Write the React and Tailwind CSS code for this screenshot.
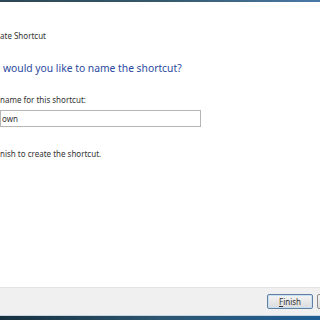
export default function App() {
    const font = { fontFamily: '"Noto Sans", "Open Sans", sans-serif' };

    return (
        <div className="w-[320px] h-[320px] flex flex-col overflow-hidden bg-white" style={font}>
            {/* window frame top */}
            <div className="h-[2px] bg-gradient-to-r from-[#2c4753] via-[#35596b] to-[#4a79a8]" />

            <div className="flex-1 flex flex-col bg-white text-[#222]">
                <div className="pt-[28px] text-[8px] leading-[12px] text-[#333]">ate Shortcut</div>

                <div className="mt-[18px] pl-[3px] text-[10.3px] leading-[16px] text-[#2b4aa0]">
                    would you like to name the shortcut?
                </div>

                <div className="mt-[18px] text-[8px] leading-[12px] text-[#333]">name for this shortcut:</div>

                <div className="mt-[4px] w-[201px] h-[17px] border border-[#b5b5b5] bg-white flex items-center pl-[1px] text-[8px] text-[#333]">
                    own
                </div>

                <div className="mt-[21px] text-[8px] leading-[12px] text-[#333]">nish to create the shortcut.</div>
            </div>

            {/* button area */}
            <div className="h-[28px] bg-[#f0f0f0] border-t border-[#e3e3e3] flex items-start pt-[6px] pl-[267px] gap-[4px] overflow-hidden">
                <button className="shrink-0 w-[46px] h-[15px] border border-[#5f7fa3] rounded-[2px] bg-gradient-to-b from-[#f4f4f4] to-[#dcdcdc] text-[8px] leading-[12px] text-[#333] flex items-center justify-center shadow-[inset_0_0_0_1px_#c9dff3]">
                    <span><span className="underline">F</span>inish</span>
                </button>
                <button className="shrink-0 w-[46px] h-[15px] border border-[#8a8a8a] rounded-[2px] bg-gradient-to-b from-[#f4f4f4] to-[#dcdcdc]" />
            </div>

            {/* taskbar */}
            <div className="h-[1px] bg-[#c7d6e2]" />
            <div className="h-[4px] bg-gradient-to-r from-[#16303f] via-[#2d5670] to-[#1d5d94]" />
        </div>
    );
}
